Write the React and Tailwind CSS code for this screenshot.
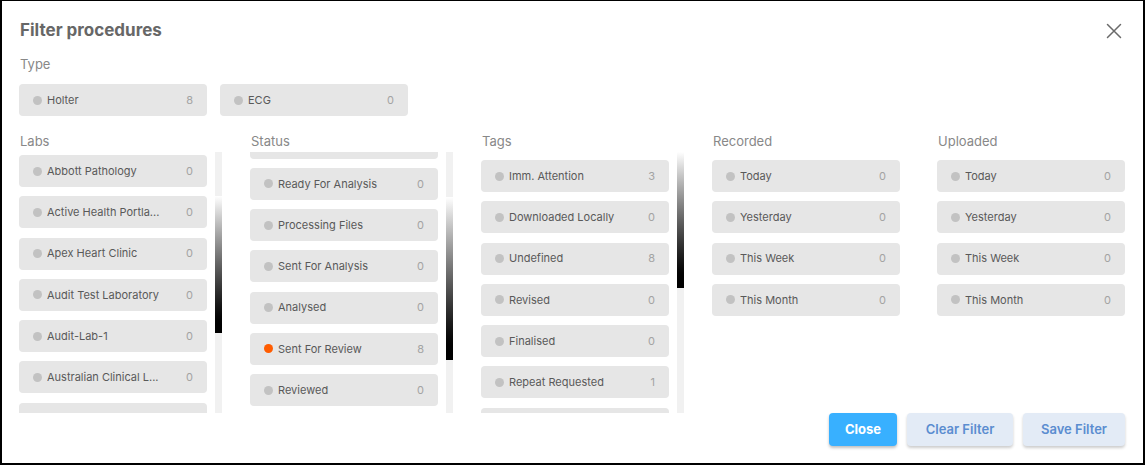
import React from 'react';

const font = { fontFamily: 'Inter, "Noto Sans", Arial, sans-serif' };

// partial rows at the clipped edges are drawn as blank chips
const labs = [
  { name: 'Abbott Pathology', count: 0 },
  { name: 'Active Health Portla...', count: 0 },
  { name: 'Apex Heart Clinic', count: 0 },
  { name: 'Audit Test Laboratory', count: 0 },
  { name: 'Audit-Lab-1', count: 0 },
  { name: 'Australian Clinical L...', count: 0 },
  { blank: true },
];

const statuses = [
  { blank: true },
  { name: 'Ready For Analysis', count: 0 },
  { name: 'Processing Files', count: 0 },
  { name: 'Sent For Analysis', count: 0 },
  { name: 'Analysed', count: 0 },
  { name: 'Sent For Review', count: 8, active: true },
  { name: 'Reviewed', count: 0 },
];

const tags = [
  { name: 'Imm. Attention', count: 3 },
  { name: 'Downloaded Locally', count: 0 },
  { name: 'Undefined', count: 8 },
  { name: 'Revised', count: 0 },
  { name: 'Finalised', count: 0 },
  { name: 'Repeat Requested', count: 1 },
  { blank: true },
];

const periods = [
  { name: 'Today', count: 0 },
  { name: 'Yesterday', count: 0 },
  { name: 'This Week', count: 0 },
  { name: 'This Month', count: 0 },
];

const Chip = ({ name, count, active, blank }) => (
  <div className="flex items-center shrink-0 w-[188px] h-[32px] rounded-[4px] bg-[#e6e6e6] px-[14px]">
    {!blank && (
      <>
        <span className={`w-[9px] h-[9px] rounded-full shrink-0 ${active ? 'bg-[#ff5c00]' : 'bg-[#c2c2c2]'}`} />
        <span className="ml-[5px] flex-1 text-[11px] text-[#595959] whitespace-nowrap overflow-hidden">{name}</span>
        <span className="text-[11px] text-[#a3a3a3]">{count}</span>
      </>
    )}
  </div>
);

const Scrollbar = ({ thumb }) => (
  <div className="w-[7px] h-full bg-[#f1f1f1] ml-[8px] shrink-0">
    <div className={`w-full bg-linear-to-b from-white to-black ${thumb}`} />
  </div>
);

const Column = ({ title, items, offset, thumb, width }) => (
  <div className={`flex flex-col shrink-0 ${width}`}>
    <div className="h-[16px] leading-[16px] text-[13px] text-[#888] pl-[1px]">{title}</div>
    <div className="flex h-[261px] mt-[3px]">
      <div className="h-full overflow-hidden">
        <div className={`flex flex-col gap-[9.3px] ${offset}`}>
          {items.map((it, i) => (
            <Chip key={i} {...it} />
          ))}
        </div>
      </div>
      {thumb && <Scrollbar thumb={thumb} />}
    </div>
  </div>
);

export default function App() {
  return (
    <div style={font} className="w-[1145px] h-[465px] bg-white border-x-2 border-b-2 border-t border-black pl-[17px] pr-[18px] pt-[18px] flex flex-col">
      {/* header */}
      <div className="flex items-center justify-between h-[24px]">
        <h2 className="text-[17px] font-bold text-[#676767] pl-[1px]">Filter procedures</h2>
        <button className="mr-[3px] w-[16px] h-[16px] flex items-center justify-center">
          <svg width="16" height="16" viewBox="0 0 16 16" fill="none" stroke="#6a6a6a" strokeWidth="1.5" strokeLinecap="round">
            <path d="M1.5 1.5 L14.5 14.5 M14.5 1.5 L1.5 14.5" />
          </svg>
        </button>
      </div>

      {/* type */}
      <div className="mt-[13px] h-[16px] leading-[16px] text-[13px] text-[#888] pl-[1px]">Type</div>
      <div className="mt-[12px] flex gap-[13px]">
        <Chip name="Holter" count={8} />
        <Chip name="ECG" count={0} />
      </div>

      {/* columns */}
      <div className="mt-[17px] flex">
        <Column title="Labs" items={labs} offset="mt-[3px]" thumb="mt-[44px] h-[137px]" width="w-[231px]" />
        <Column title="Status" items={statuses} offset="-mt-[25.5px]" thumb="mt-[45px] h-[163px]" width="w-[231px]" />
        <Column title="Tags" items={tags} offset="mt-[8px]" thumb="mt-0 h-[136px]" width="w-[231px]" />
        <Column title="Recorded" items={periods} offset="mt-[8px]" width="w-[225px]" />
        <Column title="Uploaded" items={periods} offset="mt-[8px]" width="w-[188px]" />
      </div>

      {/* footer */}
      <div className="flex justify-end gap-[10px]">
        <button className="w-[68px] h-[33px] rounded-[4px] bg-[#38b0ff] text-white text-[13px] font-bold shadow-[0_2px_3px_rgba(0,0,0,0.25)]">
          Close
        </button>
        <button className="w-[106px] h-[33px] rounded-[4px] bg-[#e3ebf6] text-[#5b8dd0] text-[13px] font-semibold shadow-[0_2px_3px_rgba(0,0,0,0.2)]">
          Clear Filter
        </button>
        <button className="w-[102px] h-[33px] rounded-[4px] bg-[#e3ebf6] text-[#5b8dd0] text-[13px] font-semibold shadow-[0_2px_3px_rgba(0,0,0,0.2)]">
          Save Filter
        </button>
      </div>
    </div>
  );
}
